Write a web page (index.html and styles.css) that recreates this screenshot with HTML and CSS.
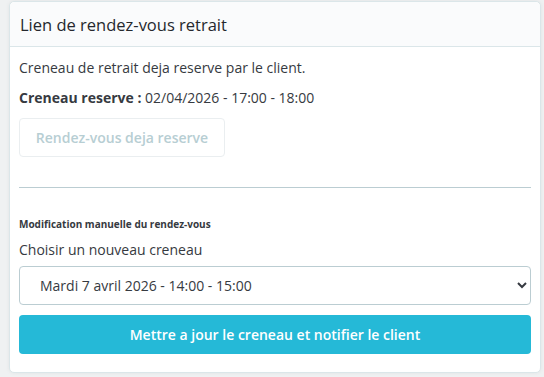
FILE: index.html
```html
<!DOCTYPE html>
<html>

<head>
    <title>Rendez-vous retrait</title>
    <link rel="stylesheet" href="styles.css">
</head>

<body>

    <div class="card">
        <div class="card-header">
            <h3>Lien de rendez-vous retrait</h3>
        </div>

        <div class="card-body">
            <p>Creneau de retrait deja reserve par le client.</p>
            <p><b>Creneau reserve :</b> 02/04/2026 - 17:00 - 18:00</p>

            <button class="btn btn-disabled" disabled>Rendez-vous deja reserve</button>

            <hr>

            <h6>Modification manuelle du rendez-vous</h6>

            <label for="slot">Choisir un nouveau creneau</label>
            <select id="slot" class="custom-select">
                <option>Mardi 7 avril 2026 - 14:00 - 15:00</option>
                <option>Mardi 7 avril 2026 - 15:00 - 16:00</option>
                <option>Mercredi 8 avril 2026 - 10:00 - 11:00</option>
            </select>

            <button class="btn btn-primary">Mettre a jour le creneau et notifier le client</button>
        </div>
    </div>

</body>

</html>
```

FILE: styles.css
```css
* {
    box-sizing: border-box
}

body {
    margin: 0;
    padding: 1px 3px 3px 9px;
    background: #eff1f2;
    font-family: "Open Sans", "Liberation Sans", sans-serif;
    color: #363a41;
}

.card {
    width: 532px;
    background: #fff;
    border: 1px solid #dbe6e9;
    border-radius: 5px;
    box-shadow: 0 0 4px 0 rgba(0, 0, 0, 0.06);
}

.card-header {
    height: 45px;
    padding: 0 10px;
    display: flex;
    align-items: center;
    background: #fafbfc;
    border-bottom: 1px solid #dbe6e9;
    border-radius: 5px 5px 0 0;
}

.card-header h3 {
    margin: 0;
    font-size: 16.5px;
    font-weight: 400;
    color: #25282d;
}

.card-body {
    padding: 11px 9px 18px 9px;
    display: flex;
    flex-direction: column;
}

p {
    margin: 0 0 11px 0;
    font-size: 14px;
    line-height: 19px;
}

.btn {
    font-family: inherit;
    font-size: 14px;
    font-weight: 600;
    border-radius: 4px;
    height: 39px;
}

.btn-disabled {
    align-self: flex-start;
    width: 206px;
    background: #fff;
    color: #b7ced3;
    border: 1px solid #eaeef0;
}

hr {
    width: 100%;
    margin: 30px 0 29px 0;
    border: none;
    border-top: 1px solid #bbcdd2;
}

h6 {
    margin: 0 0 9px 0;
    font-size: 10px;
    font-weight: 700;
    line-height: 14px;
}

label {
    font-size: 14px;
    line-height: 19px;
    margin-bottom: 7px;
}

.custom-select {
    width: 100%;
    height: 39px;
    padding: 0 10px 0 16px;
    font-family: inherit;
    font-size: 14px;
    color: #363a41;
    background: #fff;
    border: 1px solid #bbcdd2;
    border-radius: 4px;
}

.btn-primary {
    width: 100%;
    margin-top: 10px;
    background: #25b9d7;
    color: #fff;
    border: none;
}
```
